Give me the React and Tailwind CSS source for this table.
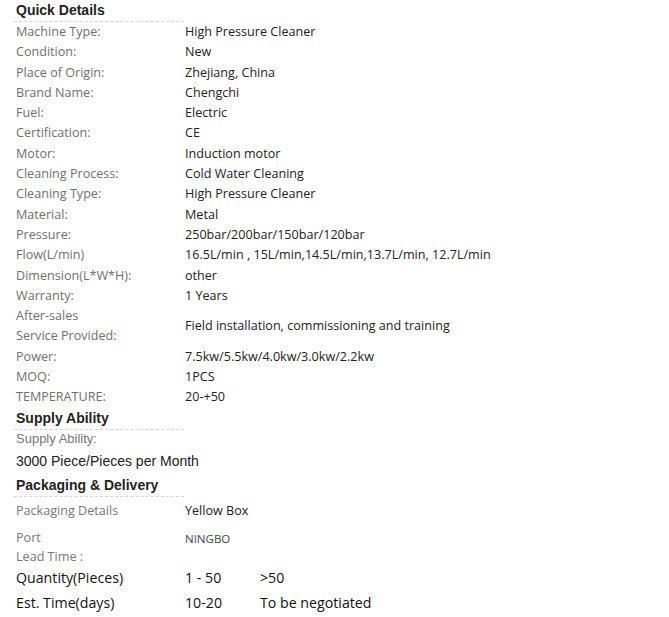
import React from 'react';

const quickDetails = [
  ['Machine Type:', 'High Pressure Cleaner'],
  ['Condition:', 'New'],
  ['Place of Origin:', 'Zhejiang, China'],
  ['Brand Name:', 'Chengchi'],
  ['Fuel:', 'Electric'],
  ['Certification:', 'CE'],
  ['Motor:', 'Induction motor'],
  ['Cleaning Process:', 'Cold Water Cleaning'],
  ['Cleaning Type:', 'High Pressure Cleaner'],
  ['Material:', 'Metal'],
  ['Pressure:', '250bar/200bar/150bar/120bar'],
  ['Flow(L/min)', '16.5L/min , 15L/min,14.5L/min,13.7L/min, 12.7L/min'],
  ['Dimension(L*W*H):', 'other'],
  ['Warranty:', '1 Years'],
  [['After-sales', 'Service Provided:'], 'Field installation, commissioning and training'],
  ['Power:', '7.5kw/5.5kw/4.0kw/3.0kw/2.2kw'],
  ['MOQ:', '1PCS'],
  ['TEMPERATURE:', '20-+50'],
];

const SectionTitle = ({ children }) => (
  <div className="-ml-0.5 w-[170px] border-b border-dashed border-[#d6d6d6] pl-0.5 font-['Liberation_Sans',Arial,sans-serif] text-[14px] font-bold leading-[21px] text-[#222]">
    {children}
  </div>
);

const App = () => {
  return (
    <div className="min-h-[617px] w-[669px] bg-white pl-4 font-['Open_Sans','Noto_Sans',sans-serif] text-[12.6px]">
      <SectionTitle>Quick Details</SectionTitle>
      <div>
        {quickDetails.map(([label, value], i) => (
          <div key={i} className="flex items-center">
            <div className="w-[169px] shrink-0 leading-[20.3px] text-[#6f6f6f]">
              {Array.isArray(label) ? label.map((l) => <div key={l}>{l}</div>) : label}
            </div>
            <div className="leading-[20.3px] text-[#222]">{value}</div>
          </div>
        ))}
      </div>

      <SectionTitle>Supply Ability</SectionTitle>
      <div className="font-['Liberation_Sans',Arial,sans-serif] text-[13px] leading-[18px] text-[#777]">
        Supply Ability:
      </div>
      <div className="font-['Liberation_Sans',Arial,sans-serif] text-[14px] leading-[27px] text-[#222]">
        3000 Piece/Pieces per Month
      </div>

      <SectionTitle>Packaging &amp; Delivery</SectionTitle>
      <div className="flex h-[30px] items-center">
        <div className="w-[169px] shrink-0 text-[#777]">Packaging Details</div>
        <div className="text-[#222]">Yellow Box</div>
      </div>
      <div className="flex h-[24px] items-center">
        <div className="w-[169px] shrink-0 text-[#777]">Port</div>
        <div className="text-[11.5px] text-[#444]">NINGBO</div>
      </div>
      <div className="flex h-[14px] items-center text-[#777]">Lead Time :</div>
      <div className="flex h-[26px] items-center text-[14.2px] text-[#111]">
        <div className="w-[169px] shrink-0">Quantity(Pieces)</div>
        <div className="w-[75px] shrink-0">1 - 50</div>
        <div>&gt;50</div>
      </div>
      <div className="flex h-[24px] items-center text-[14.2px] text-[#111]">
        <div className="w-[169px] shrink-0">Est. Time(days)</div>
        <div className="w-[75px] shrink-0">10-20</div>
        <div>To be negotiated</div>
      </div>
    </div>
  );
};

export default App;
